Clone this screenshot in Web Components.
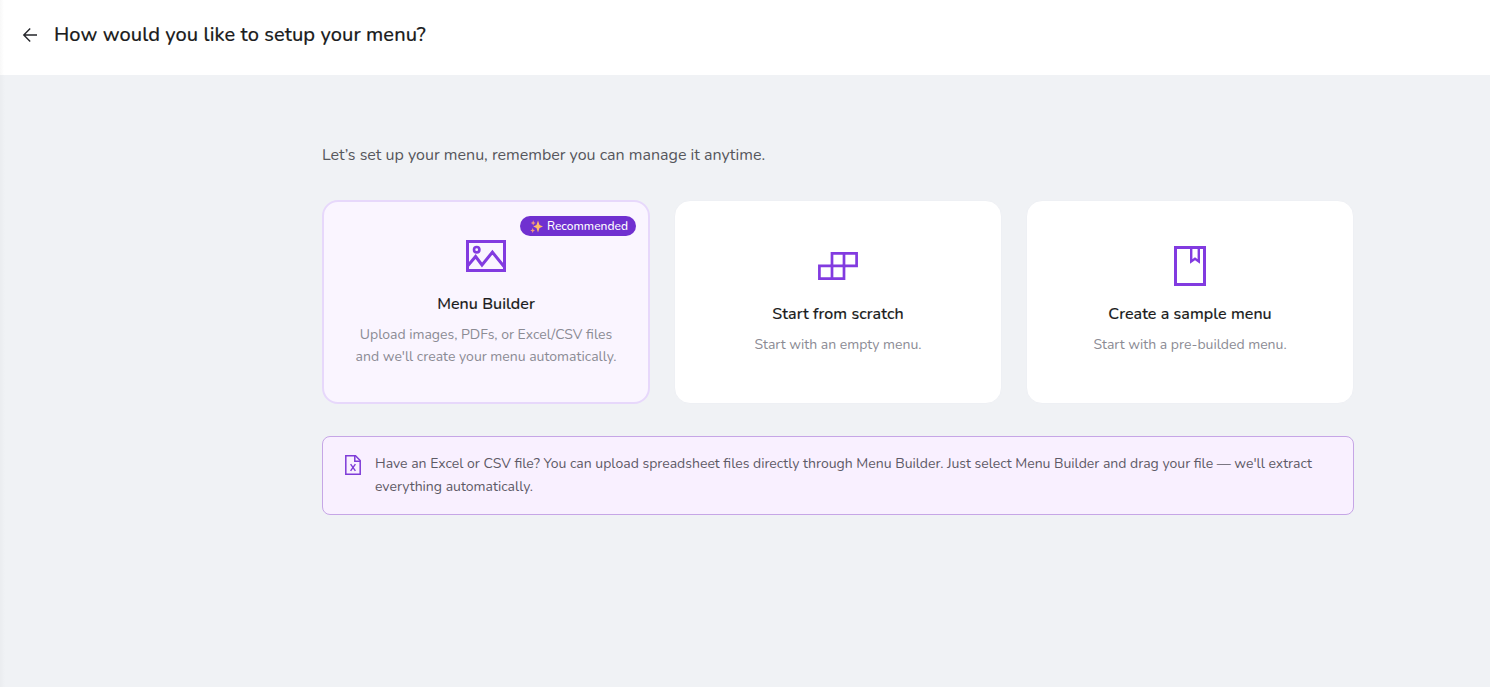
<!DOCTYPE html>
<html lang="en">
<head>
<meta charset="UTF-8">
<title>Menu setup</title>
<style>
    body {
        margin: 0;
        min-height: 100vh;
        background: #f0f2f5;
        font-family: Nunito, Lato, "Noto Sans", sans-serif;
        color: #1b1c20;
    }
</style>
</head>
<body>

<menu-setup></menu-setup>

<script>
const icons = {
    image: `
        <svg width="40" height="40" viewBox="0 0 40 40" fill="none" stroke="#823be0" stroke-width="3">
            <rect x="1.5" y="5.5" width="37" height="29"/>
            <circle cx="10.7" cy="13.7" r="2.7" stroke-width="2.6"/>
            <path d="M2 29.5 9.6 20.5 16 29 26.4 16.2 38 30.5"/>
        </svg>`,
    blocks: `
        <svg width="40" height="40" viewBox="0 0 40 40" fill="none" stroke="#823be0" stroke-width="2.7">
            <path d="M14 7.4H38.6V19.8H26V32.6H1.4V19.8H14Z"/>
            <path d="M26 7.4V19.8H14V32.6"/>
        </svg>`,
    book: `
        <svg width="40" height="40" viewBox="0 0 40 40" fill="none" stroke="#823be0" stroke-width="3">
            <rect x="5.5" y="1.5" width="29" height="37"/>
            <path d="M21.2 2V15.4L25 12.8 28.8 15.4V2" stroke-width="2.4"/>
        </svg>`
};

class PageHeader extends HTMLElement {

    constructor() {
        super();

        this.attachShadow({ mode: "open" });
    }

    connectedCallback() {

        this.shadowRoot.innerHTML = `
            <style>
                :host {
                    display: flex;
                    align-items: center;
                    gap: 16px;
                    box-sizing: border-box;
                    height: 75px;
                    padding: 0 22px 6px;
                    background: linear-gradient(90deg, #f8f8f8, white 4px);
                }

                button {
                    display: flex;
                    padding: 0;
                    border: none;
                    background: none;
                }

                h1 {
                    margin: 0;
                    font-size: 20px;
                    font-weight: 500;
                    line-height: 28px;
                    letter-spacing: 0.08px;
                    -webkit-text-stroke: 0.15px;
                }
            </style>

            <button aria-label="Back">
                <svg width="16" height="16" viewBox="0 0 16 16" fill="none" stroke="#25262b" stroke-width="1.4">
                    <path d="M15 8H2M8.2 1.6 1.8 8 8.2 14.4"/>
                </svg>
            </button>

            <h1><slot></slot></h1>
        `;
    }
}

class OptionCard extends HTMLElement {

    constructor() {
        super();

        this.attachShadow({ mode: "open" });
    }

    connectedCallback() {

        this.shadowRoot.innerHTML = `
            <style>
                :host {
                    position: relative;
                    display: flex;
                    flex-direction: column;
                    align-items: center;
                    justify-content: center;
                    box-sizing: border-box;
                    height: 204px;
                    padding-bottom: 3px;
                    border: 1px solid #eef0f4;
                    border-radius: 16px;
                    background: white;
                    text-align: center;
                }

                :host([recommended]) {
                    padding-bottom: 1px;
                    border: 2px solid #e7d8fb;
                    background: #faf5ff;
                }

                svg {
                    display: block;
                }

                h2 {
                    margin: 16px 0 8px;
                    font-size: 16px;
                    font-weight: 500;
                    line-height: 24px;
                    letter-spacing: 0.07px;
                    -webkit-text-stroke: 0.15px;
                }

                p {
                    margin: 0;
                    color: #8b8b94;
                    font-size: 14px;
                    line-height: 22px;
                }

                ::slotted([slot="badge"]) {
                    position: absolute;
                    top: 14px;
                    right: 12px;
                }
            </style>

            <slot name="badge"></slot>
            ${icons[this.getAttribute("icon")]}
            <h2>${this.getAttribute("heading")}</h2>
            <p><slot></slot></p>
        `;
    }
}

class RecommendedBadge extends HTMLElement {

    constructor() {
        super();

        this.attachShadow({ mode: "open" });
    }

    connectedCallback() {

        this.shadowRoot.innerHTML = `
            <style>
                :host {
                    display: flex;
                    align-items: center;
                    gap: 4px;
                    box-sizing: border-box;
                    width: 116px;
                    height: 20px;
                    padding-left: 10px;
                    border-radius: 10px;
                    background: #7030d0;
                    color: white;
                    font-size: 12px;
                    font-weight: 500;
                    line-height: 20px;
                    white-space: nowrap;
                }
            </style>

            <svg width="13" height="13" viewBox="0 0 13 13" fill="#ffb968">
                <path d="M8 .5 9.5 4.9 13 6.5 9.5 8.1 8 12.5 6.5 8.1 3.2 6.5 6.5 4.9Z"/>
                <path d="M3.2.3 3.9 2.3 5.7 3 3.9 3.7 3.2 5.5 2.5 3.7.8 3 2.5 2.3Z" fill="#f39a78"/>
                <path d="M2.7 8 3.4 9.8 5 10.5 3.4 11.2 2.7 13 2 11.2.3 10.5 2 9.8Z" fill="#f39a78"/>
            </svg>
            <span><slot></slot></span>
        `;
    }
}

class InfoBanner extends HTMLElement {

    constructor() {
        super();

        this.attachShadow({ mode: "open" });
    }

    connectedCallback() {

        this.shadowRoot.innerHTML = `
            <style>
                :host {
                    display: flex;
                    align-items: flex-start;
                    gap: 12px;
                    box-sizing: border-box;
                    height: 79px;
                    padding: 15px 20px;
                    border: 1px solid #c6a6e6;
                    border-radius: 8px;
                    background: #f9f0ff;
                    color: #5e5a66;
                }

                svg {
                    flex: none;
                    margin-top: 3px;
                }

                p {
                    margin: 0;
                    font-size: 14px;
                    line-height: 23px;
                }
            </style>

            <svg width="20" height="20" viewBox="0 0 20 20" fill="none" stroke="#7e3bd8" stroke-width="1.5">
                <path d="M2.8.8H12.5L17.2 5.5V19.2H2.8Z"/>
                <path d="M11.8 1V6.2H17"/>
                <path d="M7.6 9.2 12.4 15.8M12.4 9.2 7.6 15.8" stroke-width="1.4"/>
            </svg>
            <p><slot></slot></p>
        `;
    }
}

class MenuSetup extends HTMLElement {

    constructor() {
        super();

        this.attachShadow({ mode: "open" });
    }

    connectedCallback() {

        this.shadowRoot.innerHTML = `
            <style>
                :host {
                    display: block;
                    box-sizing: border-box;
                    min-height: 100vh;
                    background: linear-gradient(90deg, rgba(0, 0, 0, 0.025), transparent 5px);
                }

                main {
                    width: 1032px;
                    margin-left: 322px;
                    padding-top: 68px;
                }

                .intro {
                    margin: 0 0 33px;
                    color: #56575c;
                    font-size: 16px;
                    line-height: 24px;
                }

                .options {
                    display: grid;
                    grid-template-columns: repeat(3, 1fr);
                    gap: 24px;
                    margin-bottom: 32px;
                }
            </style>

            <page-header>How would you like to setup your menu?</page-header>

            <main>
                <p class="intro">Let’s set up your menu, remember you can manage it anytime.</p>

                <div class="options">
                    <option-card icon="image" heading="Menu Builder" recommended>
                        <recommended-badge slot="badge">Recommended</recommended-badge>
                        Upload images, PDFs, or Excel/CSV files<br>and we'll create your menu automatically.
                    </option-card>
                    <option-card icon="blocks" heading="Start from scratch">Start with an empty menu.</option-card>
                    <option-card icon="book" heading="Create a sample menu">Start with a pre-builded menu.</option-card>
                </div>

                <info-banner>Have an Excel or CSV file? You can upload spreadsheet files directly through Menu Builder. Just select Menu Builder and drag your file — we'll extract everything automatically.</info-banner>
            </main>
        `;
    }
}

customElements.define("page-header", PageHeader);
customElements.define("option-card", OptionCard);
customElements.define("recommended-badge", RecommendedBadge);
customElements.define("info-banner", InfoBanner);
customElements.define("menu-setup", MenuSetup);
</script>
</body>
</html>
